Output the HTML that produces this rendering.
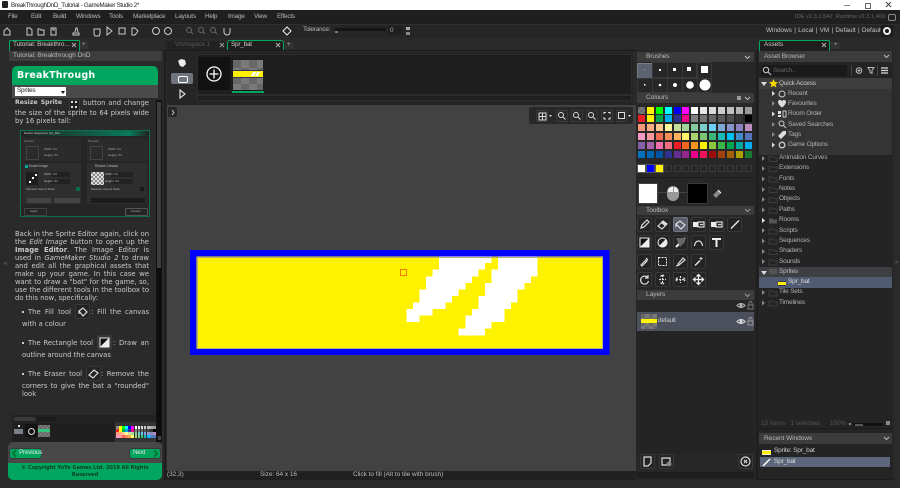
<!DOCTYPE html>
<html><head><meta charset="utf-8"><title>GameMaker</title>
<style>
html,body{margin:0;padding:0;background:#2a2a2a}
#r{position:relative;width:900px;height:488px;overflow:hidden;background:#2a2a2a;font:6.4px "Liberation Sans",sans-serif;color:#b8b8b8}
#r div,#r span.a,#r svg.a{position:absolute}
.t{white-space:nowrap;line-height:10px;height:10px;letter-spacing:-.22px}
.x{white-space:nowrap;line-height:10px;height:10px}
.h{background:#3c3c3c;color:#b8b8b8;line-height:10px;white-space:nowrap;letter-spacing:-.1px;font-size:6.6px}
.l{left:15px;width:134px;text-align:justify;text-align-last:justify;font:6.8px/8px "DejaVu Sans",sans-serif;color:#cacaca;height:8px}
.n{text-align-last:left;white-space:nowrap}
.b{background:#242424;border:1px solid #383838;border-radius:2px;width:13px;height:13px;box-sizing:content-box}
.b svg{position:absolute;left:0;top:0;width:13px;height:13px}
.i{stroke:#ddd;fill:none;stroke-width:1.2}
.s{display:grid;grid-template-columns:repeat(13,7px);grid-auto-rows:7px;column-gap:1.9px;row-gap:1.85px}
.s i{display:block}
.tr{height:10px;line-height:10px;white-space:nowrap;color:#b0b0b0;letter-spacing:-.18px;font-size:6.5px}
.ck{background:repeating-conic-gradient(#7a7a7a 0 25%,#686868 0 50%) 0 0/16px 16px}
</style></head><body><div id="r">

<!-- title bar -->
<div style="left:0;top:0;width:900px;height:10px;background:#fff"></div>
<div style="left:2px;top:1px;width:6px;height:7px;background:#222;border-radius:1px"></div>
<div class="t" style="left:11px;top:1px;color:#222;font-size:6.2px;line-height:9px;letter-spacing:-.3px">BreakThroughDnD_Tutorial - GameMaker Studio 2*</div>
<div style="left:844px;top:5px;width:6px;height:1px;background:#888"></div>
<div style="left:865px;top:3px;width:4px;height:4px;border:1px solid #666"></div>
<svg class="a" style="left:885px;top:2px" width="7" height="6"><path d="M1 0L6 5M6 0L1 5" stroke="#444" fill="none"/></svg>

<!-- menu bar -->
<div style="left:0;top:10px;width:900px;height:14px;background:#1f1f1f"></div>
<div class="t" style="left:8px;top:12px">File</div>
<div class="t" style="left:31px;top:12px">Edit</div>
<div class="t" style="left:53px;top:12px">Build</div>
<div class="t" style="left:76px;top:12px">Windows</div>
<div class="t" style="left:109px;top:12px">Tools</div>
<div class="t" style="left:133px;top:12px">Marketplace</div>
<div class="t" style="left:175px;top:12px">Layouts</div>
<div class="t" style="left:205px;top:12px">Help</div>
<div class="t" style="left:228px;top:12px">Image</div>
<div class="t" style="left:254px;top:12px">View</div>
<div class="t" style="left:277px;top:12px">Effects</div>
<div class="x" style="left:795px;top:12px;color:#666;font-size:5.7px">IDE v2.3.1.542&nbsp; Runtime v2.3.1.409</div>
<div style="left:888px;top:14px;width:6px;height:5px;border:1px solid #888;border-radius:2px"></div>

<!-- toolbar -->
<div style="left:0;top:24px;width:900px;height:13px;background:#262626;border-top:1px solid #2e2e2e"></div>
<svg class="a" style="left:0;top:25px" width="300" height="13" fill="none" stroke="#ccc" stroke-width="1">
<path d="M4 6l3-3 3 3v4H4z"/>
<path d="M27 3h3l2 2v5h-5zM38 4h2l1 1h3v5h-6zM51 3h5v7h-5zM53 3v2h2M73 10h6v-2h-6zM75 7l1-4h1l1 4"/>
<path d="M94 4h6v5l-1 2h-4l-1-2zM107 2l5 4-5 4zM119 3h6v6h-6zM132 3h3l3 3-3 4h-3z"/>
<circle cx="156" cy="6" r="3.5"/><circle cx="168" cy="6" r="3.5"/>
<g stroke="#666"><circle cx="189" cy="5" r="2.5"/><path d="M191 7l2 2"/><circle cx="201" cy="5" r="2.5"/><path d="M203 7l2 2"/><circle cx="213" cy="5" r="2.5"/><path d="M215 7l2 2"/></g>
<path d="M224 3v4a3 3 0 006 0V3"/>
<path d="M283 6l4-4 4 4-4 4z" stroke="#eee"/>
</svg>
<div class="t" style="left:303px;top:24.500px;color:#b4b4b4">Tolerance:</div>
<div style="left:335px;top:28px;width:51px;height:3px;background:#151515"></div>
<div style="left:335px;top:31px;width:3px;height:2px;background:#777"></div>
<div style="left:388px;top:26px;width:15px;height:9px;background:#1f1f1f"></div>
<div class="t" style="left:390px;top:26px;color:#aaa">0</div>
<div style="left:406px;top:27px;width:4px;height:3px;background:#aaa"></div>
<div style="left:406px;top:32px;width:4px;height:3px;background:#888"></div>
<div class="x" style="left:766px;top:26px;color:#c4c4c4;word-spacing:.5px">Windows | Local | VM | Default | Default</div>
<div style="left:881px;top:25px;width:12px;height:12px;background:#1c1c1c;border-radius:2px"></div>
<svg class="a" style="left:882px;top:26px" width="10" height="10"><circle cx="5" cy="5" r="3" stroke="#eee" stroke-width="2" fill="none"/></svg>

<!-- left panel -->
<div style="left:8px;top:49px;width:155px;height:431px;background:#2a2a2a"></div>
<div style="left:9px;top:40px;width:69px;height:10px;background:#222;border:1px solid #00a860;border-bottom:0;border-radius:2px 2px 0 0"></div>
<div class="t" style="left:13px;top:40px;color:#ccc;letter-spacing:-.05px">Tutorial: Breakthro...</div>
<svg class="a" style="left:71px;top:42px" width="6" height="6"><path d="M1 1l4 4M5 1l-4 4" stroke="#aaa" fill="none"/></svg>
<div style="left:80px;top:41px;width:8px;height:8px;background:#333;border-radius:1px"></div>
<div class="x" style="left:82px;top:40px;font-size:6px;color:#aaa">+</div>
<div class="h" style="left:9px;top:51px;width:153px;height:10px;padding-left:4px;box-sizing:border-box;background:#3d3d3d">Tutorial: Breakthrough DnD</div>

<div style="left:12px;top:66px;width:146px;height:19px;background:#00a55e;border-radius:5px 5px 0 0"></div>
<div class="x" style="left:17px;top:70px;color:#fff;font:bold 9.500px/12px 'DejaVu Sans',sans-serif;height:12px;letter-spacing:.2px">BreakThrough</div>
<div style="left:12px;top:85px;width:146px;height:13px;background:#4a4a4a"></div>
<div style="left:15px;top:87px;width:51px;height:9px;background:#fff"></div>
<div class="t" style="left:17px;top:86px;color:#222">Sprites</div>
<div style="left:61px;top:91px;border-left:2px solid transparent;border-right:2px solid transparent;border-top:3px solid #111"></div>

<div class="l n" style="top:99px;width:50px;font-size:6.200px;word-spacing:1px"><b>Resize Sprite</b></div>
<div class="l" style="top:99px;left:83px;width:66px">button and change</div>
<div style="left:69px;top:99px;width:9px;height:10px;background:#1f1f1f;border:1px solid #3a3a3a"></div>
<svg class="a" style="left:70px;top:100px" width="9" height="10" fill="#ddd"><rect x="1" y="1" width="2" height="2"/><rect x="5" y="1" width="2" height="2"/><rect x="1" y="6" width="2" height="2"/><rect x="5" y="6" width="2" height="2"/></svg>
<div class="l" style="top:109px">the size of the sprite to 64 pixels wide</div>
<div class="l n" style="top:117px">by 16 pixels tall:</div>

<!-- dialog thumbnail -->
<div style="left:20px;top:130px;width:130px;height:87px;background:#252525;border:1px solid #0d6e4c;box-sizing:border-box"></div>
<div style="left:21px;top:131px;width:128px;height:5px;background:linear-gradient(90deg,#222,#0a7a5a 85%,#222)"></div>
<div class="x" style="left:24px;top:131px;font-size:3px;line-height:5px;height:5px;color:#ccc">Resize Sequence: spr_Bat</div>
<div style="left:23px;top:138px;width:58px;height:23px;background:#2b2b2b"></div>
<div style="left:87px;top:138px;width:60px;height:23px;background:#2b2b2b"></div>
<div style="left:23px;top:163px;width:58px;height:41px;background:#2e2e2e"></div>
<div style="left:87px;top:163px;width:60px;height:41px;background:#2e2e2e"></div>
<div class="x" style="left:24px;top:136px;font-size:3px;color:#999">Current</div>
<div class="x" style="left:88px;top:136px;font-size:3px;color:#999">Preview</div>
<div style="left:26px;top:146px;width:11px;height:12px;border:1px solid #444"></div>
<div style="left:90px;top:146px;width:11px;height:12px;border:1px solid #444"></div>
<div class="x" style="left:44px;top:144px;font-size:3px;color:#aaa">Width&nbsp; 64</div>
<div class="x" style="left:44px;top:150px;font-size:3px;color:#aaa">Height&nbsp; 64</div>
<div class="x" style="left:108px;top:144px;font-size:3px;color:#aaa">Width&nbsp; 64</div>
<div class="x" style="left:108px;top:150px;font-size:3px;color:#aaa">Height&nbsp; 64</div>
<div style="left:25px;top:165px;width:3px;height:3px;background:#0a9"></div>
<div class="x" style="left:29px;top:161px;font-size:3.4px;color:#bbb">Scale Image</div>
<div class="x" style="left:95px;top:161px;font-size:3.4px;color:#bbb">Resize Canvas</div>
<div style="left:26px;top:172px;width:12px;height:13px;background:#1d1d1d"></div>
<div style="left:29px;top:181px;width:2px;height:2px;background:#fff"></div>
<div style="left:32px;top:177px;width:2px;height:2px;background:#fff"></div>
<div style="left:35px;top:174px;width:2px;height:2px;background:#fff"></div>
<div style="left:91px;top:172px;width:13px;height:13px;background:repeating-conic-gradient(#ddd 0 25%,#888 0 50%) 0 0/4px 4px"></div>
<div style="left:50px;top:172px;width:20px;height:5px;background:#222"></div>
<div style="left:50px;top:179px;width:20px;height:5px;background:#222"></div>
<div style="left:111px;top:172px;width:22px;height:5px;background:#222"></div>
<div style="left:111px;top:179px;width:22px;height:5px;background:#222"></div>
<div class="x" style="left:44px;top:169px;font-size:3px;color:#bbb">Width&nbsp; 64</div>
<div class="x" style="left:44px;top:176px;font-size:3px;color:#bbb">Height&nbsp; 64</div>
<div class="x" style="left:105px;top:169px;font-size:3px;color:#bbb">Width&nbsp; 64</div>
<div class="x" style="left:105px;top:176px;font-size:3px;color:#bbb">Height&nbsp; 64</div>
<div class="x" style="left:26px;top:184px;font-size:3px;color:#aaa">Maintain Aspect Ratio</div>
<div class="x" style="left:91px;top:184px;font-size:3px;color:#aaa">Maintain Aspect Ratio</div>
<div style="left:76px;top:187px;width:4px;height:4px;background:#0a6a4a"></div>
<div style="left:140px;top:187px;width:4px;height:4px;background:#1a1a1a"></div>
<div style="left:27px;top:198px;width:24px;height:5px;background:#444"></div>
<div style="left:54px;top:198px;width:26px;height:5px;background:#444"></div>
<div style="left:91px;top:198px;width:54px;height:5px;background:#1c1c1c"></div>
<div style="left:24px;top:208px;width:21px;height:6px;border:1px solid #444;border-radius:1px"></div>
<div style="left:125px;top:208px;width:21px;height:6px;border:1px solid #555;border-radius:1px"></div>
<div class="x" style="left:30px;top:206px;font-size:3px;color:#aaa">Apply</div>
<div class="x" style="left:131px;top:206px;font-size:3px;color:#aaa">Cancel</div>

<div class="l" style="top:230px">Back in the Sprite Editor again, click on</div>
<div class="l" style="top:238px">the <i>Edit Image</i> button to open up the</div>
<div class="l" style="top:246px"><b>Image Editor</b>. The Image Editor is</div>
<div class="l" style="top:254px">used in <i>GameMaker Studio 2</i> to draw</div>
<div class="l" style="top:262px">and edit all the graphical assets that</div>
<div class="l" style="top:270px">make up your game. In this case we</div>
<div class="l" style="top:278px">want to draw a "bat" for the game, so,</div>
<div class="l" style="top:286px">use the different tools in the toolbox to</div>
<div class="l n" style="top:294px">do this now, specifically:</div>

<div style="left:22px;top:311px;width:2px;height:2px;background:#ccc"></div>
<div class="l" style="left:28px;width:43px;top:308px">The Fill tool</div>
<div class="l" style="left:91px;width:58px;top:308px">: Fill the canvas</div>
<div class="b" style="left:75px;top:304px"><svg viewBox="0 0 13 13"><path class="i" d="M3 6l4-3 4 4-4 4zM3 6v3" /></svg></div>
<div class="l n" style="left:22px;width:127px;top:320px">with a colour</div>
<div style="left:22px;top:342px;width:2px;height:2px;background:#ccc"></div>
<div class="l" style="left:28px;width:65px;top:339px">The Rectangle tool</div>
<div class="l" style="left:113px;width:36px;top:339px">: Draw an</div>
<div class="b" style="left:97px;top:335px;background:#3a3a3a"><svg viewBox="0 0 13 13"><rect x="2" y="2" width="9" height="9" fill="#111" stroke="#eee"/><path d="M2 11L11 2v9z" fill="#eee"/></svg></div>
<div class="l n" style="left:22px;width:127px;top:351px">outline around the canvas</div>
<div style="left:22px;top:373px;width:2px;height:2px;background:#ccc"></div>
<div class="l" style="left:28px;width:54px;top:370px">The Eraser tool</div>
<div class="l" style="left:101px;width:48px;top:370px">: Remove the</div>
<div class="b" style="left:86px;top:366px"><svg viewBox="0 0 13 13"><path class="i" d="M2 8l5-5 4 3-5 5z"/></svg></div>
<div class="l" style="left:22px;width:127px;top:382px">corners to give the bat a "rounded"</div>
<div class="l n" style="left:22px;width:127px;top:390px">look</div>

<!-- embedded image -->
<div style="left:12px;top:415px;width:144px;height:27px;background:#222"></div>
<div style="left:14px;top:417px;width:21px;height:4px;background:#3a3a3a"></div>
<div style="left:37px;top:417px;width:19px;height:4px;background:#1a1a1a;border:0"></div>
<div style="left:14px;top:423px;width:100px;height:18px;background:#1f1f1f"></div>
<div style="left:18px;top:425px;width:2px;height:2px;background:#ddd"></div>
<div style="left:14px;top:429px;width:9px;height:5px;background:#7a7f8a"></div>
<div style="left:25px;top:424px;width:12px;height:13px;background:#111"></div>
<div style="left:28px;top:428px;width:5px;height:5px;border:1px solid #ddd;border-radius:50%"></div>
<div class="ck" style="left:38px;top:425px;width:12px;height:12px;background-size:4px 4px"></div>
<div style="left:38px;top:429px;width:12px;height:3px;background:#34c480"></div>
<div style="left:115px;top:422px;width:41px;height:20px;background:#333"></div>
<div class="s" style="left:116px;top:426px;grid-template-columns:repeat(13,2.6px);grid-auto-rows:2.6px;column-gap:.5px;row-gap:.5px"><i style="background:#888"></i><i style="background:#ff0"></i><i style="background:#0f0"></i><i style="background:#0ff"></i><i style="background:#00f"></i><i style="background:#f0f"></i><i style="background:#fff"></i><i style="background:#eee"></i><i style="background:#ddd"></i><i style="background:#ccc"></i><i style="background:#bbb"></i><i style="background:#aaa"></i><i style="background:#999"></i><i style="background:#e22"></i><i style="background:#ff0"></i><i style="background:#0a5"></i><i style="background:#0ae"></i><i style="background:#339"></i><i style="background:#e08"></i><i style="background:#888"></i><i style="background:#777"></i><i style="background:#666"></i><i style="background:#555"></i><i style="background:#444"></i><i style="background:#333"></i><i style="background:#000"></i><i style="background:#f97"></i><i style="background:#fa8"></i><i style="background:#fc8"></i><i style="background:#ff9"></i><i style="background:#cd9"></i><i style="background:#ad9"></i><i style="background:#8c9"></i><i style="background:#7cc"></i><i style="background:#6cf"></i><i style="background:#7ad"></i><i style="background:#89c"></i><i style="background:#88b"></i><i style="background:#b8b"></i><i style="background:#f9c"></i><i style="background:#f99"></i><i style="background:#f65"></i><i style="background:#f85"></i><i style="background:#fa5"></i><i style="background:#ff6"></i><i style="background:#ac7"></i><i style="background:#7c7"></i><i style="background:#3b7"></i><i style="background:#1bb"></i><i style="background:#0bf"></i><i style="background:#48c"></i><i style="background:#57b"></i></div>

<!-- left scrollbar -->
<div style="left:156px;top:100px;width:6px;height:342px;background:#111"></div>
<div style="left:157px;top:102px;width:4px;height:166px;background:#3e3e3e"></div>
<div style="left:157px;top:268px;width:4px;height:168px;background:#0d0d0d"></div>
<div style="left:158px;top:436px;width:3px;height:4px;background:#444"></div>

<!-- footer -->
<div style="left:8px;top:442px;width:154px;height:21px;background:#484848;border-radius:5px 5px 0 0"></div>
<div style="left:8px;top:463px;width:154px;height:17px;background:#00a55e;border-radius:0 0 5px 5px"></div>
<div style="left:10px;top:449px;width:31px;height:9px;background:#00a55e;border-radius:2px;outline:1px solid #3a3a3a"></div>
<div style="left:130px;top:449px;width:30px;height:9px;background:#00a55e;border-radius:2px;outline:1px solid #3a3a3a"></div>
<div class="t" style="left:19px;top:448px;color:#e8e8e8">Previous</div>
<div class="t" style="left:133px;top:448px;color:#e8e8e8">Next</div>
<svg class="a" style="left:11px;top:449px" width="7" height="9"><path d="M5 1L2 4.500 5 8" stroke="#073" stroke-width="2" fill="none"/></svg>
<svg class="a" style="left:152px;top:449px" width="7" height="9"><path d="M2 1l3 3.500L2 8" stroke="#073" stroke-width="2" fill="none"/></svg>
<div style="left:8px;top:465px;width:154px;text-align:center;font:bold 5px/6.6px 'DejaVu Sans',sans-serif;color:#0b3d26">© Copyright YoYo Games Ltd. 2019 All Rights<br>Reserved</div>

<div class="x" style="left:4px;top:259px;color:#777;font-size:6px">«</div>

<!-- centre tabs -->
<div style="left:166px;top:41px;width:60px;height:9px;background:#222;border-radius:2px 2px 0 0"></div>
<div class="t" style="left:175px;top:40px;color:#555">Workspace 1</div>
<svg class="a" style="left:219px;top:42px" width="6" height="6"><path d="M1 1l4 4M5 1l-4 4" stroke="#999" fill="none"/></svg>
<div style="left:227px;top:40px;width:55px;height:10px;background:#1e1e1e;border:1px solid #00a860;border-bottom:0;border-radius:3px 3px 0 0"></div>
<div class="t" style="left:231px;top:40px;color:#ccc">Spr_bat</div>
<svg class="a" style="left:275px;top:42px" width="6" height="6"><path d="M1 1l4 4M5 1l-4 4" stroke="#aaa" fill="none"/></svg>
<div style="left:285px;top:42px;width:8px;height:7px;background:#333"></div>
<div class="x" style="left:287px;top:40px;font-size:6px;color:#aaa">+</div>
<div style="left:166px;top:50px;width:470px;height:1px;background:#1a1a1a"></div>

<!-- frame strip -->
<div style="left:167px;top:52px;width:466px;height:53px;background:#252525"></div>
<div style="left:197px;top:54px;width:435px;height:47px;background:#1f1f1f;border:1px solid #2b2b2b;box-sizing:border-box"></div>
<div style="left:197px;top:94px;width:434px;height:2px;background:#2c2c2c"></div>
<svg class="a" style="left:176px;top:58px" width="12" height="10"><path d="M2 3l3-2 4 1 1 4-3 3-3-1z" fill="#eee"/></svg>
<div style="left:171px;top:73px;width:22px;height:11px;background:#70747e;border-radius:2px"></div>
<div style="left:178px;top:76px;width:8px;height:5px;border:1px solid #fff;border-radius:2px"></div>
<svg class="a" style="left:178px;top:89px" width="9" height="10"><path d="M2 1l5 4-5 4z" fill="none" stroke="#ddd" stroke-width="1.2"/></svg>
<div style="left:198px;top:57px;width:32px;height:33px;background:#121212"></div>
<svg class="a" style="left:205px;top:65px" width="18" height="18" fill="none" stroke="#fff" stroke-width="1.3"><circle cx="9" cy="9" r="7"/><path d="M9 4.500v9M4.500 9h9"/></svg>
<div style="left:231px;top:58px;width:34px;height:33px;background:#1c1c1c"></div>
<div class="ck" style="left:233px;top:60px;width:30px;height:30px"></div>
<div style="left:233px;top:71px;width:30px;height:7px;background:#fff200"></div>
<div style="left:233px;top:70px;width:30px;height:1px;background:#335"></div>
<div style="left:233px;top:77px;width:30px;height:1px;background:#335"></div>
<div style="left:252px;top:72px;width:3px;height:4px;background:#fff;transform:skewX(-30deg)"></div>
<div style="left:256px;top:72px;width:3px;height:4px;background:#fff;transform:skewX(-30deg)"></div>
<div style="left:232px;top:91px;width:32px;height:2px;background:#00a55e"></div>

<!-- canvas -->
<div style="left:167px;top:105px;width:469px;height:366px;background:#424242"></div>
<div style="left:168px;top:107px;width:9px;height:10px;background:#262626;border-radius:1px"></div>
<svg class="a" style="left:170px;top:109px" width="6" height="7"><path d="M2 1l2 2.500L2 6" stroke="#ccc" fill="none"/></svg>

<svg class="a" style="left:190px;top:250px" width="419.500" height="105" viewBox="0 0 64 16" shape-rendering="crispEdges">
<rect width="64" height="16" fill="#0000ff"/>
<rect x="1" y="1" width="62" height="14" fill="#fff200"/>
<g fill="#fff">
<rect x="38" y="1" width="8" height="1"/><rect x="47" y="1" width="6" height="2"/>
<rect x="38" y="2" width="7" height="1"/>
<rect x="37" y="3" width="7" height="1"/><rect x="46" y="3" width="7" height="1"/>
<rect x="36" y="4" width="7" height="1"/><rect x="46" y="4" width="6" height="1"/>
<rect x="36" y="5" width="6" height="1"/><rect x="45" y="5" width="6" height="1"/>
<rect x="35" y="6" width="6" height="1"/><rect x="45" y="6" width="5" height="1"/>
<rect x="35" y="7" width="5" height="1"/><rect x="44" y="7" width="6" height="1"/>
<rect x="34" y="8" width="5" height="1"/><rect x="44" y="8" width="5" height="1"/>
<rect x="33" y="9" width="4" height="1"/><rect x="43" y="9" width="5" height="1"/>
<rect x="33" y="10" width="2" height="1"/><rect x="42" y="10" width="6" height="1"/>
<rect x="42" y="11" width="4" height="1"/>
<rect x="41" y="12" width="4" height="1"/>
</g>
</svg>
<div style="left:197px;top:257px;width:406px;height:91.500px;border:.5px solid #b8b070;box-sizing:border-box"></div>
<div style="left:400px;top:269px;width:7px;height:7px;border:1px solid #f57a00;box-sizing:border-box"></div>

<!-- canvas toolbar -->
<div style="left:529px;top:107px;width:104px;height:17px;background:#282828;border-radius:2px"></div>
<svg class="a" style="left:529px;top:107px" width="104" height="17" fill="none" stroke="#ddd" stroke-width="1">
<g stroke="#3a3a3a"><rect x="7.500" y="3.500" width="11" height="11"/><rect x="27.500" y="3.500" width="11" height="11"/><rect x="42.500" y="3.500" width="11" height="11"/><rect x="57.500" y="3.500" width="11" height="11"/><rect x="72.500" y="3.500" width="11" height="11"/><rect x="87.500" y="3.500" width="10" height="11"/></g>
<path d="M10 6h7v7h-7zM13.500 6v7M10 9.500h7"/>
<path d="M20 8h3l-1.500 2z" fill="#ddd" stroke="none"/>
<circle cx="32" cy="8" r="2.500"/><path d="M34 10l2.500 2.500"/>
<circle cx="47" cy="8" r="2.500"/><path d="M49 10l2.500 2.500"/>
<circle cx="62" cy="8" r="2.500"/><path d="M64 10l2.500 2.500"/>
<path d="M75 7V5.500h2M81 7V5.500h-2M75 10v2h2M81 10v2h-2"/>
<rect x="89.500" y="5.500" width="6" height="6"/>
<path d="M99 8h3l-1.500 2z" fill="#ddd" stroke="none"/>
</svg>

<!-- status bar -->
<div style="left:166px;top:471px;width:470px;height:9px;background:#202020"></div>
<div class="x" style="left:167px;top:470px;color:#bbb">(32,3)</div>
<div class="x" style="left:260px;top:470px;color:#bbb">Size: 64 x 16</div>
<div class="x" style="left:353px;top:470px;color:#bbb">Click to fill (Alt to tile with brush)</div>

<!-- brushes -->
<div style="left:636px;top:50px;width:120px;height:430px;background:#272727"></div>
<div class="h" style="left:637px;top:52px;width:117px;height:10px;padding-left:9px;box-sizing:border-box">Brushes</div>
<svg class="a" style="left:744px;top:55px" width="7" height="5"><path d="M1 1l2.500 2.500L6 1" stroke="#bbb" fill="none"/></svg>
<div style="left:637px;top:63px;width:14px;height:14px;background:#5d6270;border:1px solid #7a7f8a"></div>
<svg class="a" style="left:637px;top:62px" width="75" height="31" fill="#fff" stroke="none">
<g fill="none" stroke="#383838"><path d="M15.500 .5h44v15h-44zM30.500 .5v15M45.500 .5v15M.5 16.500h74v14H.5zM15.500 16.500v14M30.500 16.500v14M45.500 16.500v14M60.500 .5h14v16M60.500 .5v30"/></g>
<rect x="7" y="7" width="1" height="1" fill="#aaa"/><rect x="22" y="7" width="2" height="2"/><rect x="36" y="6" width="3" height="3"/><rect x="50" y="5" width="4" height="4"/><rect x="64" y="4" width="7" height="7"/>
<rect x="7" y="22" width="1.500" height="1.500"/><circle cx="23" cy="23" r="1.300"/><circle cx="38" cy="23" r="2"/><circle cx="53" cy="23" r="3.800"/><circle cx="68" cy="23" r="5.500"/>
</svg>
<div class="h" style="left:637px;top:93px;width:117px;height:10px;padding-left:9px;box-sizing:border-box">Colours</div>
<div style="left:737px;top:96px;width:4px;height:4px;background:#999"></div>
<svg class="a" style="left:744px;top:96px" width="7" height="5"><path d="M1 1l2.500 2.500L6 1" stroke="#bbb" fill="none"/></svg>
<div class="s" style="left:638px;top:106.500px">
<i class="ck" style="background-size:5px 5px"></i><i style="background:#fff200"></i><i style="background:#0f0"></i><i style="background:#0ff"></i><i style="background:#00f"></i><i style="background:#f0f"></i><i style="background:#fff"></i><i style="background:#e6e6e6"></i><i style="background:#d9d9d9"></i><i style="background:#ccc"></i><i style="background:#bfbfbf"></i><i style="background:#b3b3b3"></i><i style="background:#999"></i>
<i style="background:#ed1c24"></i><i style="background:#fff200"></i><i style="background:#00a651"></i><i style="background:#00aeef"></i><i style="background:#2e3192"></i><i style="background:#ec008c"></i><i style="background:#808080"></i><i style="background:#737373"></i><i style="background:#666"></i><i style="background:#595959"></i><i style="background:#4d4d4d"></i><i style="background:#333"></i><i style="background:#000"></i>
<i style="background:#f7977a"></i><i style="background:#f9ad81"></i><i style="background:#fdc68a"></i><i style="background:#fff79a"></i><i style="background:#c4df9b"></i><i style="background:#a2d39c"></i><i style="background:#82ca9d"></i><i style="background:#7bcdc8"></i><i style="background:#6ecff6"></i><i style="background:#7ea7d8"></i><i style="background:#8493ca"></i><i style="background:#8882be"></i><i style="background:#bc8dbf"></i>
<i style="background:#f49ac2"></i><i style="background:#f6989d"></i><i style="background:#f26c4f"></i><i style="background:#f68e55"></i><i style="background:#fbaf5c"></i><i style="background:#fff467"></i><i style="background:#acd372"></i><i style="background:#7cc576"></i><i style="background:#3bb878"></i><i style="background:#1abbb4"></i><i style="background:#00bff3"></i><i style="background:#438cca"></i><i style="background:#5574b9"></i>
<i style="background:#8560a8"></i><i style="background:#a864a8"></i><i style="background:#f06eaa"></i><i style="background:#f26d7d"></i><i style="background:#ed1c24"></i><i style="background:#f26522"></i><i style="background:#f7941d"></i><i style="background:#fff200"></i><i style="background:#8dc63f"></i><i style="background:#39b54a"></i><i style="background:#00a651"></i><i style="background:#00a99d"></i><i style="background:#00aeef"></i>
<i style="background:#0072bc"></i><i style="background:#0065b0"></i><i style="background:#0054a6"></i><i style="background:#2e3192"></i><i style="background:#662d91"></i><i style="background:#92278f"></i><i style="background:#ec008c"></i><i style="background:#ed145b"></i><i style="background:#9e0b0f"></i><i style="background:#a0410d"></i><i style="background:#a36209"></i><i style="background:#aba000"></i><i style="background:#197b30"></i>
</div>
<div class="s" style="left:638px;top:164.500px">
<i style="background:#fff;outline:1px solid #555"></i><i style="background:#00f;outline:1px solid #555"></i><i style="background:#fff200;outline:1px solid #555"></i><i style="border:1px solid #3a3a3a;box-sizing:border-box"></i><i style="border:1px solid #3a3a3a;box-sizing:border-box"></i><i style="border:1px solid #3a3a3a;box-sizing:border-box"></i><i style="border:1px solid #3a3a3a;box-sizing:border-box"></i><i style="border:1px solid #3a3a3a;box-sizing:border-box"></i><i style="border:1px solid #3a3a3a;box-sizing:border-box"></i><i style="border:1px solid #3a3a3a;box-sizing:border-box"></i><i style="border:1px solid #3a3a3a;box-sizing:border-box"></i><i style="border:1px solid #3a3a3a;box-sizing:border-box"></i><i style="border:1px solid #3a3a3a;box-sizing:border-box"></i>
</div>
<div style="left:637px;top:177px;width:117px;height:1px;background:#1c1c1c"></div>

<div style="left:639px;top:184px;width:18px;height:19px;background:#fff;outline:1px solid #444"></div>
<div style="left:657px;top:192px;width:31px;height:1px;background:#444"></div>
<div style="left:667px;top:186px;width:12px;height:15px;background:#999;border-radius:6px"></div>
<div style="left:668px;top:187px;width:5px;height:5px;background:#eee;border-radius:4px 0 0 0"></div>
<div style="left:674px;top:187px;width:4px;height:5px;background:#eee;border-radius:0 4px 0 0"></div>
<div style="left:688px;top:184px;width:19px;height:19px;background:#000;outline:1px solid #3a3a3a"></div>
<svg class="a" style="left:712px;top:188px" width="11" height="11"><path d="M1 7l5-5 3 3-5 5z" fill="#888"/><path d="M6 2l3 3" stroke="#fff"/></svg>

<div class="h" style="left:637px;top:206px;width:117px;height:9px;line-height:9px;padding-left:9px;box-sizing:border-box">Toolbox</div>
<svg class="a" style="left:744px;top:208px" width="7" height="5"><path d="M1 1l2.500 2.500L6 1" stroke="#999" fill="none"/></svg>

<div class="b" style="left:637px;top:217px"><svg viewBox="0 0 13 13"><path class="i" d="M3 10l1-3 5-5 2 2-5 5z"/></svg></div>
<div class="b" style="left:655px;top:217px"><svg viewBox="0 0 13 13"><path class="i" d="M2 8l5-5 4 3-5 5z"/><path d="M7 3l4 3-2 2-4-3z" fill="#ddd"/></svg></div>
<div class="b" style="left:673px;top:217px;background:#5a5f6b;border-color:#70747e"><svg viewBox="0 0 13 13"><path class="i" d="M2 6l4-3 5 4-4 4zM2 6v3"/></svg></div>
<div class="b" style="left:691px;top:217px"><svg viewBox="0 0 13 13"><rect x="1" y="4" width="5" height="5" fill="#eee"/><rect class="i" x="6" y="4" width="6" height="5"/><path class="i" d="M8 6.500h3"/></svg></div>
<div class="b" style="left:709px;top:217px"><svg viewBox="0 0 13 13"><rect x="1" y="4" width="5" height="5" fill="#eee"/><rect class="i" x="6" y="4" width="6" height="5"/><path class="i" d="M8 6.500h3"/></svg></div>
<div class="b" style="left:727px;top:217px"><svg viewBox="0 0 13 13"><path d="M3 10.500L11 2.500" stroke="#eee" stroke-width="1.300"/></svg></div>

<div class="b" style="left:637px;top:235px"><svg viewBox="0 0 13 13"><rect x="2" y="2" width="9" height="9" fill="#111" stroke="#eee"/><path d="M2 11L11 2v9z" fill="#eee"/></svg></div>
<div class="b" style="left:655px;top:235px"><svg viewBox="0 0 13 13"><circle cx="6.500" cy="6.500" r="4.500" stroke="#eee" fill="none"/><path d="M3 10L10 3A4.500 4.500 0 013 10z" fill="#eee"/></svg></div>
<div class="b" style="left:673px;top:235px"><svg viewBox="0 0 13 13"><path d="M2 11l9-9" stroke="#eee" stroke-width="2"/><path d="M2 2h9v4L6 11z" fill="#666"/></svg></div>
<div class="b" style="left:691px;top:235px"><svg viewBox="0 0 13 13"><path class="i" d="M2.500 10a4 5 0 018 0"/></svg></div>
<div class="b" style="left:709px;top:235px"><svg viewBox="0 0 13 13"><path d="M2 2h9v2h-3.500v7h-2V4H2z" fill="#eee"/></svg></div>

<div class="b" style="left:637px;top:254px"><svg viewBox="0 0 13 13"><path class="i" d="M3 10l5-5 1 1-5 5zM8 3l2 2"/></svg></div>
<div class="b" style="left:655px;top:254px"><svg viewBox="0 0 13 13"><rect x="2.500" y="2.500" width="8" height="8" fill="none" stroke="#eee" stroke-dasharray="2 1"/></svg></div>
<div class="b" style="left:673px;top:254px"><svg viewBox="0 0 13 13"><path class="i" d="M4 9l5-6 2 2-6 5zM2 11l3-1"/></svg></div>
<div class="b" style="left:691px;top:254px"><svg viewBox="0 0 13 13"><path d="M3 10.500l5-5" stroke="#eee" stroke-width="1.300"/><path d="M9 2v3M7.500 3.500h3" stroke="#ddd"/></svg></div>

<div class="b" style="left:637px;top:272px"><svg viewBox="0 0 13 13"><path class="i" d="M10 5a4 4 0 10.500 3M10 2v3H7"/></svg></div>
<div class="b" style="left:655px;top:272px"><svg viewBox="0 0 13 13"><path class="i" d="M6.500 2v9M4.500 3.500l2-2 2 2M4.500 9.500l2 2 2-2M3 6.500h7" stroke-dasharray="2 1"/></svg></div>
<div class="b" style="left:673px;top:272px"><svg viewBox="0 0 13 13"><path class="i" d="M2 6.500h9M3.500 4.500l-2 2 2 2M9.500 4.500l2 2-2 2M6.500 3v7" stroke-dasharray="2 1"/></svg></div>
<div class="b" style="left:691px;top:272px"><svg viewBox="0 0 13 13"><path d="M6.500 1.500v10M1.500 6.500h10M4.500 3.500l2-2 2 2M4.500 9.500l2 2 2-2M3.500 4.500l-2 2 2 2M9.500 4.500l2 2-2 2" stroke="#eee" stroke-width="1.300" fill="none"/></svg></div>

<div class="h" style="left:637px;top:290px;width:117px;height:10px;padding-left:9px;box-sizing:border-box">Layers</div>
<svg class="a" style="left:744px;top:293px" width="7" height="5"><path d="M1 1l2.500 2.500L6 1" stroke="#999" fill="none"/></svg>
<svg class="a" style="left:736px;top:301px" width="20" height="9" fill="none" stroke="#bbb"><path d="M1 4.500q4-4 8 0q-4 4-8 0z"/><circle cx="5" cy="4.500" r="1.500" fill="#bbb" stroke="none"/><rect x="12" y="4" width="5" height="4" stroke="#777"/><path d="M13 4V2a1.500 1.500 0 013 0v2" stroke="#777"/></svg>
<div style="left:637px;top:312px;width:117px;height:19px;background:#4b505c"></div>
<div class="ck" style="left:641px;top:314px;width:16px;height:15px;background-size:8px 8px"></div>
<div style="left:641px;top:319px;width:16px;height:4px;background:#fff200"></div>
<div class="t" style="left:658px;top:316px;color:#ccc">default</div>
<svg class="a" style="left:736px;top:317px" width="20" height="9" fill="none" stroke="#ddd"><path d="M1 4.500q4-4 8 0q-4 4-8 0z"/><circle cx="5" cy="4.500" r="1.500" fill="#ddd" stroke="none"/><rect x="12" y="4" width="5" height="4" stroke="#999"/><path d="M13 4V2a1.500 1.500 0 013 0v2" stroke="#999"/></svg>

<div style="left:637px;top:331px;width:117px;height:122px;background:#242424"></div>
<div class="b" style="left:640px;top:454px"><svg viewBox="0 0 13 13"><path class="i" d="M3 2h7v6l-3 3H3z"/></svg></div>
<div class="b" style="left:659px;top:454px"><svg viewBox="0 0 13 13"><path class="i" d="M2 3h8v7H2z"/><circle cx="9" cy="9" r="2.500" fill="#888"/></svg></div>
<div class="b" style="left:738px;top:454px"><svg viewBox="0 0 13 13"><circle class="i" cx="6.500" cy="6.500" r="4.500"/><path class="i" d="M5 5l3 3M8 5l-3 3"/></svg></div>
<div style="left:637px;top:472px;width:117px;height:6px;background:#1e1e1e"></div>

<!-- assets panel -->
<div style="left:758px;top:50px;width:135px;height:430px;background:#242424"></div>
<div style="left:759px;top:40px;width:69px;height:10px;background:#1e1e1e;border:1px solid #00a860;border-bottom:0;border-radius:2px 2px 0 0"></div>
<div class="t" style="left:764px;top:40px;color:#ccc;letter-spacing:0">Assets</div>
<svg class="a" style="left:821px;top:42px" width="6" height="6"><path d="M1 1l4 4M5 1l-4 4" stroke="#aaa" fill="none"/></svg>
<div style="left:831px;top:42px;width:9px;height:7px;background:#333"></div>
<div class="x" style="left:834px;top:40px;font-size:6px;color:#aaa">+</div>
<div class="h" style="left:759px;top:51px;width:133px;height:11px;line-height:11px;padding-left:5px;box-sizing:border-box">Asset Browser</div>
<svg class="a" style="left:883px;top:54px" width="7" height="5"><path d="M1 1l2.500 2.500L6 1" stroke="#bbb" fill="none"/></svg>
<div style="left:761px;top:65px;width:86px;height:11px;background:#1a1a1a"></div>
<svg class="a" style="left:762px;top:66px" width="10" height="10" fill="none" stroke="#ccc"><circle cx="4" cy="4" r="2.700"/><path d="M6 6l3 3"/></svg>
<div class="t" style="left:773px;top:66px;color:#666">Search...</div>
<div style="left:851px;top:65px;width:1px;height:11px;background:#444"></div>
<div style="left:877px;top:65px;width:1px;height:11px;background:#444"></div>
<svg class="a" style="left:854px;top:65px" width="36" height="11" fill="none" stroke="#bbb">
<circle cx="5" cy="5.500" r="2.800"/><path d="M3.500 5.500h3M5 4v3"/>
<path d="M14 2.500h6l-2 3v3l-2-1v-2z"/>
<path d="M27 3h7M27 5.500h7M27 8h7" stroke="#ddd" stroke-width="1.200"/>
</svg>

<div style="left:759px;top:78px;width:133px;height:77px;background:#343434"></div>
<div style="left:759px;top:78px;width:133px;height:11px;background:#3d3d3d"></div>
<div style="left:761px;top:82px;border-left:3px solid transparent;border-right:3px solid transparent;border-top:4px solid #ddd"></div>
<svg class="a" style="left:769px;top:79px" width="9" height="9"><path d="M4.500 0l1.300 3 3.200.3-2.400 2 .7 3.200-2.800-1.700L1.700 8.500l.7-3.200L0 3.300 3.200 3z" fill="#ffd800"/></svg>
<div class="tr" style="left:779px;top:79px;color:#ccc">Quick Access</div>

<svg class="a" style="left:770px;top:89px" width="22" height="62" fill="#ddd" stroke="none">
<path d="M2 2l3 2.500L2 7z"/><path d="M2 12l3 2.500L2 17z" fill="#888"/><path d="M2 22.500l3 2.500-3 2.500z"/><path d="M2 33l3 2.500L2 38z" fill="#888"/><path d="M2 43l3 2.500L2 48z" fill="#888"/><path d="M2 53.500l3 2.500-3 2.500z"/>
<g transform="translate(-3 0)">
<circle cx="15" cy="5" r="3" fill="none" stroke="#ccc"/>
<path d="M11 13.500a2 2 0 014-1 2 2 0 014 1q-1 3-4 5q-3-2-4-5z"/>
<rect x="11" y="22" width="3" height="3"/><rect x="11" y="26" width="3" height="2"/><rect x="16" y="22" width="3" height="6" fill="none" stroke="#ccc"/>
<circle cx="14.500" cy="34.500" r="2.500" fill="none" stroke="#ccc"/><path d="M16.500 36.500l2.500 2.500" stroke="#ccc"/>
<path d="M11 47l5-5h3v3l-5 5z"/>
<circle cx="15" cy="56" r="2.800" fill="none" stroke="#ccc" stroke-width="1.300"/>
</g>
</svg>
<div class="tr" style="left:788px;top:89px">Recent</div>
<div class="tr" style="left:788px;top:99px">Favourites</div>
<div class="tr" style="left:788px;top:109px">Room Order</div>
<div class="tr" style="left:788px;top:120px">Saved Searches</div>
<div class="tr" style="left:788px;top:130px">Tags</div>
<div class="tr" style="left:788px;top:140px">Game Options</div>

<svg class="a" style="left:761px;top:153px" width="22" height="156" fill="#888" stroke="none">
<path d="M1 3l3 2.500L1 8zM1 13l3 2.500L1 18zM1 23.500l3 2.500-3 2.500zM1 34l3 2.500L1 39zM1 44l3 2.500L1 49zM1 54.500l3 2.500-3 2.500zM1 75l3 2.500L1 80zM1 85.500l3 2.500-3 2.500zM1 96l3 2.500L1 101zM1 106l3 2.500-3 2.500zM1 137l3 2.500-3 2.500zM1 147.500l3 2.500-3 2.500z"/>
<path d="M1 65l3 2.500L1 70z" fill="#eee"/>
<g fill="none" stroke="#3c3c3c" transform="translate(-3 0)"><path d="M11 3.500h3l1 1h4v4h-8zM11 13.500h3l1 1h4v4h-8zM11 24h3l1 1h4v4h-8zM11 34.500h3l1 1h4v4h-8zM11 44.500h3l1 1h4v4h-8zM11 55h3l1 1h4v4h-8zM11 76h3l1 1h4v4h-8zM11 86h3l1 1h4v4h-8zM11 96.500h3l1 1h4v4h-8zM11 107h3l1 1h4v4h-8zM11 138h3l1 1h4v4h-8zM11 148h3l1 1h4v4h-8z"/></g>
<path d="M8 65.500h3l1 1h4v4H8z" fill="#555"/>
</svg>
<div class="tr" style="left:779px;top:153px">Animation Curves</div>
<div class="tr" style="left:779px;top:163px">Extensions</div>
<div class="tr" style="left:779px;top:174px">Fonts</div>
<div class="tr" style="left:779px;top:184px">Notes</div>
<div class="tr" style="left:779px;top:194px">Objects</div>
<div class="tr" style="left:779px;top:205px">Paths</div>
<div class="tr" style="left:779px;top:215px">Rooms</div>
<div class="tr" style="left:779px;top:226px">Scripts</div>
<div class="tr" style="left:779px;top:236px">Sequences</div>
<div class="tr" style="left:779px;top:246px">Shaders</div>
<div class="tr" style="left:779px;top:257px">Sounds</div>
<div style="left:759px;top:267px;width:133px;height:10px;background:#3d3f43"></div>
<div style="left:761px;top:271px;border-left:3px solid transparent;border-right:3px solid transparent;border-top:4px solid #ddd"></div>
<div style="left:769px;top:269px;width:8px;height:5px;background:#555"></div>
<div class="tr" style="left:779px;top:267px;color:#bbb">Sprites</div>
<div style="left:759px;top:277px;width:133px;height:11px;background:#505a70"></div>
<div style="left:778px;top:281px;width:8px;height:3px;background:#fff200;border:solid #335;border-width:1px 0"></div>
<div class="tr" style="left:788px;top:277px;color:#ddd">Spr_bat</div>
<div class="tr" style="left:779px;top:287px">Tile Sets</div>
<div class="tr" style="left:779px;top:298px">Timelines</div>

<div class="x" style="left:761px;top:419px;color:#555">15 items&nbsp;&nbsp;&nbsp;1 selected</div>
<div class="x" style="left:830px;top:419px;color:#555">100%</div>
<div style="left:849px;top:423px;width:2px;height:2px;background:#888"></div>
<div style="left:853px;top:423px;width:30px;height:3px;background:#111"></div>
<div style="left:855px;top:424px;width:8px;height:2px;background:#555"></div>
<div style="left:886px;top:421px;width:4px;height:4px;background:#888"></div>
<div style="left:758px;top:428px;width:135px;height:1px;background:#1c1c1c"></div>

<div class="h" style="left:759px;top:433px;width:133px;height:11px;line-height:11px;padding-left:5px;box-sizing:border-box">Recent Windows</div>
<svg class="a" style="left:883px;top:436px" width="7" height="5"><path d="M1 1l2.500 2.500L6 1" stroke="#bbb" fill="none"/></svg>
<div style="left:762px;top:450px;width:9px;height:3px;background:#fff200;border:solid #eee;border-width:1px 0"></div>
<div class="tr" style="left:774px;top:446px;color:#ccc">Sprite: Spr_bat</div>
<div style="left:760px;top:457px;width:130px;height:10px;background:#5c677c"></div>
<svg class="a" style="left:762px;top:457px" width="10" height="10"><path d="M1 9l7-7" stroke="#fff" stroke-width="1.500"/></svg>
<div class="tr" style="left:774px;top:457px;color:#ddd">Spr_bat</div>
<div style="left:758px;top:479px;width:135px;height:1px;background:#1c1c1c"></div>
<div style="left:0;top:480px;width:900px;height:8px;background:#2a2a2a"></div>

<!-- splitters -->
<div style="left:164px;top:50px;width:2px;height:430px;background:#1e1e1e"></div>
<div style="left:756px;top:50px;width:2px;height:430px;background:#1e1e1e"></div>
<div style="left:893px;top:50px;width:7px;height:430px;background:#2a2a2a"></div>
<div class="x" style="left:895px;top:258px;color:#666;font-size:6px">»</div>

</div></body></html>
